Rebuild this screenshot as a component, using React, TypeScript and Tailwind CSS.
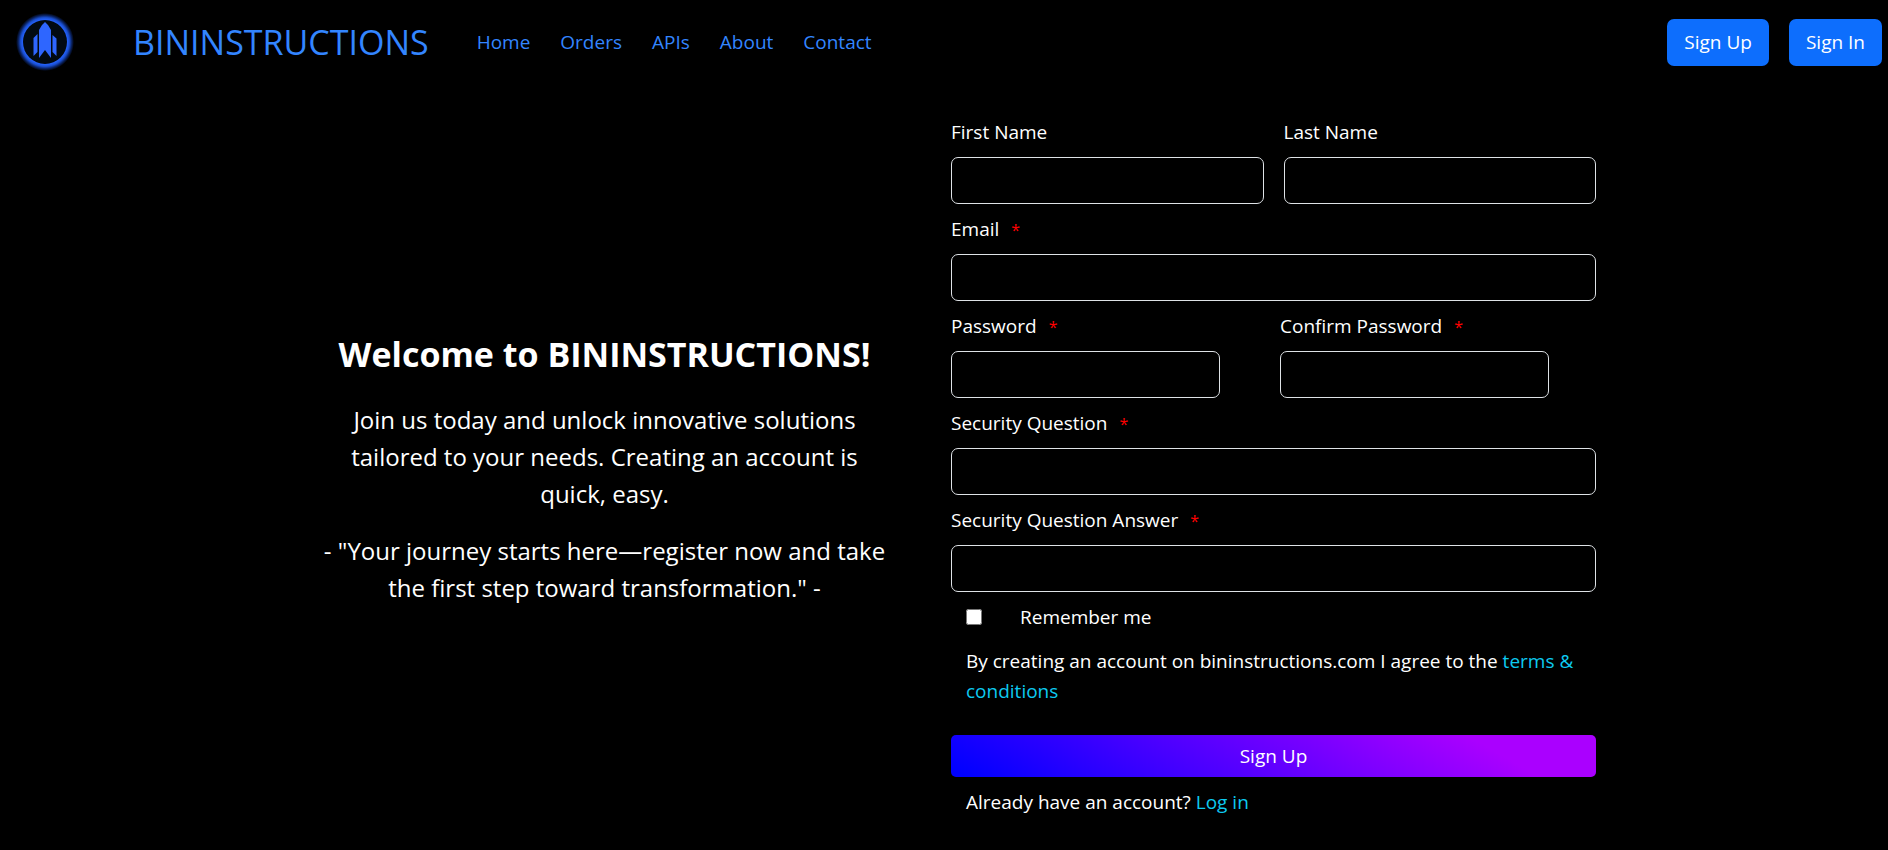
import type { ReactNode } from "react";

const navItems = ["Home", "Orders", "APIs", "About", "Contact"];

function Logo() {
  return (
    <svg width="60" height="60" viewBox="0 0 60 60" aria-hidden="true">
      <defs>
        <radialGradient id="glow">
          <stop offset="0.76" stopColor="#2563ff" />
          <stop offset="0.84" stopColor="#1a4fd0" />
          <stop offset="0.92" stopColor="#0a2260" />
          <stop offset="1" stopColor="#000000" />
        </radialGradient>
      </defs>
      <circle cx="30" cy="30" r="29" fill="url(#glow)" />
      <circle cx="30" cy="30" r="22" fill="#020a12" />
      <path
        fill="#2e66ff"
        d="M30 10l3 3 3 5v28l-6-8-6 8V18l3-5zM22.500 22v18l-4 4V26zM37.500 23l4 3.500V44l-4-4z"
      />
    </svg>
  );
}

type FieldProps = {
  id: string;
  label: string;
  type?: string;
  required?: boolean;
  className?: string;
};

function Field({ id, label, type = "text", required = false, className = "" }: FieldProps) {
  return (
    <div className={className}>
      <label htmlFor={id} className="mb-[10px] block leading-[30px]">
        {label}
        {required && <span className="ml-3 text-base leading-none text-[#ff0000]">*</span>}
      </label>
      <input
        id={id}
        type={type}
        required={required}
        className="block h-[47px] w-full rounded-[7px] border border-[#dee2e6] bg-black px-4 text-white"
      />
    </div>
  );
}

function TextLink({ children }: { children: ReactNode }) {
  return (
    <a href="#" className="text-[#0dcaf0]">
      {children}
    </a>
  );
}

export default function App() {
  return (
    <div className="min-h-screen bg-black font-['Open_Sans','Noto_Sans',sans-serif] text-[19px] leading-[30px] text-white">
      <header className="flex items-center pt-3 pr-[6px] pl-[15px]">
        <Logo />
        <a href="#" className="ml-[58px] text-[34px] leading-[60px] text-[#3385ff]">
          BININSTRUCTIONS
        </a>
        <nav className="ml-12 flex gap-[30px] text-[#3385ff]">
          {navItems.map((item) => (
            <a key={item} href="#">
              {item}
            </a>
          ))}
        </nav>
        <div className="ml-auto flex gap-5">
          <button type="button" className="h-[47px] rounded-[7px] bg-[#0d6efd] px-[17px]">
            Sign Up
          </button>
          <button type="button" className="h-[47px] rounded-[7px] bg-[#0d6efd] px-[17px]">
            Sign In
          </button>
        </div>
      </header>

      <main className="mx-auto mt-[45px] grid max-w-[1324px] grid-cols-2 gap-6 pr-[10px]">
        <section className="flex flex-col items-center justify-center gap-5 px-[40px] pt-1 text-center text-[24px] leading-[37px]">
          <h1 className="mb-1 text-[34px] leading-[45px] font-bold">Welcome to BININSTRUCTIONS!</h1>
          <p className="max-w-[530px]">
            Join us today and unlock innovative solutions tailored to your needs. Creating an account is quick, easy.
          </p>
          <p>- "Your journey starts here—register now and take the first step toward transformation." -</p>
        </section>

        <form className="flex flex-col gap-[10px]">
          <div className="grid grid-cols-2 gap-5">
            <Field id="first-name" label="First Name" />
            <Field id="last-name" label="Last Name" />
          </div>
          <Field id="email" label="Email" type="email" required />
          <div className="flex gap-[60px] pr-[47px]">
            <Field id="password" label="Password" type="password" required className="flex-1" />
            <Field id="confirm-password" label="Confirm Password" type="password" required className="flex-1" />
          </div>
          <Field id="question" label="Security Question" required />
          <Field id="answer" label="Security Question Answer" required />
          <div className="flex items-center px-[15px]">
            <input id="remember" type="checkbox" className="size-4" />
            <label htmlFor="remember" className="ml-[38px]">
              Remember me
            </label>
          </div>
          <p className="mt-1 px-[15px]">
            By creating an account on bininstructions.com I agree to the <TextLink>terms &amp; conditions</TextLink>
          </p>
          <button
            type="submit"
            className="mt-[19px] h-[42px] rounded-[5px] bg-[linear-gradient(30deg,#0000ff_2%,#aa00ff_82%)]"
          >
            Sign Up
          </button>
          <p className="px-[15px]">
            Already have an account? <TextLink>Log in</TextLink>
          </p>
        </form>
      </main>
    </div>
  );
}
